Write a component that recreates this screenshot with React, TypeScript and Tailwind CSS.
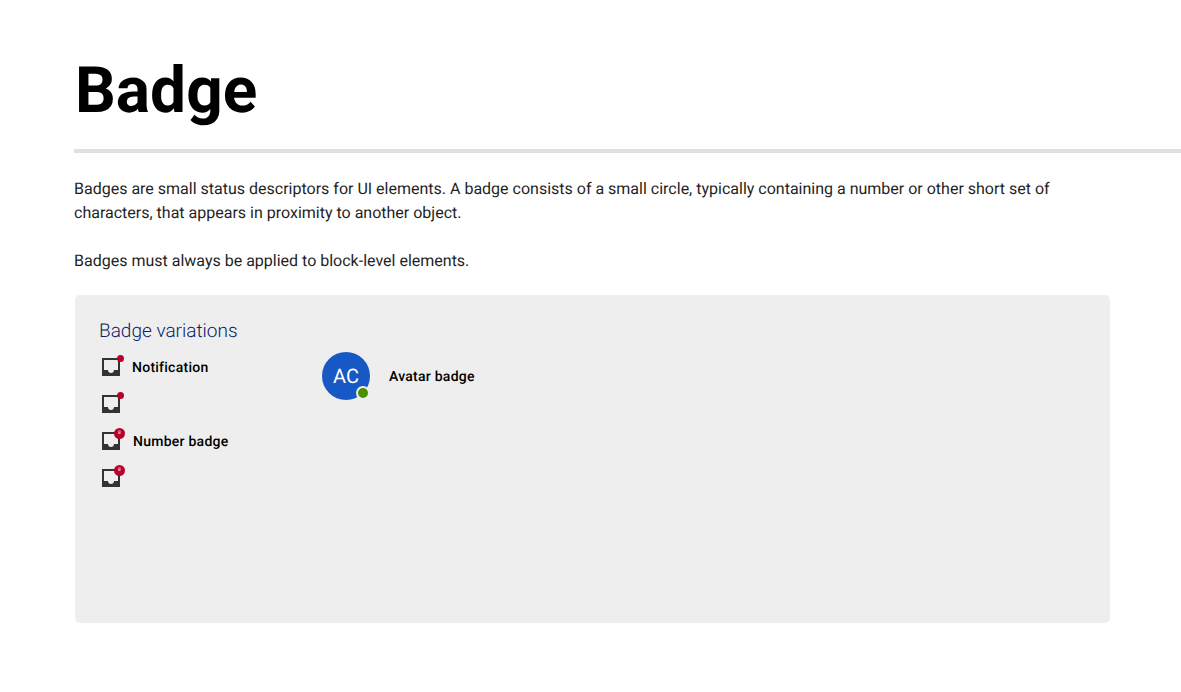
function InboxIcon() {
  return (
    <svg width="18" height="18" viewBox="0 0 18 18" className="block">
      <path
        fillRule="evenodd"
        fill="#333333"
        d="M0 0H18V18H0ZM2 2V12H6C6 13.7 7.3 15 9 15C10.7 15 12 13.7 12 12H16V2Z"
      />
    </svg>
  );
}

function BadgedIcon({ count }: { count?: boolean }) {
  return (
    <div className="relative h-[18px] w-[18px]">
      <InboxIcon />
      {count ? (
        <span className="absolute -top-[4px] -right-[5px] flex h-[11px] w-[11px] items-center justify-center rounded-full bg-[#b8002c] text-[5px] leading-none text-white">
          8
        </span>
      ) : (
        <span className="absolute -top-[3px] -right-[4px] h-[7px] w-[7px] rounded-full bg-[#b8002c]" />
      )}
    </div>
  );
}

export default function App() {
  return (
    <div className="min-h-[692px] overflow-hidden bg-white font-['Roboto',sans-serif] text-[#1f1f1f] [text-rendering:geometricPrecision]">
      <h1 className="ml-[75px] pt-[53px] text-[64px] leading-[75px] font-bold text-black">Badge</h1>
      <div className="mt-[21px] ml-[74px] h-[4px] bg-[#e0e0e0]" />
      <div className="mt-[24px] ml-[74px] w-[1000px] text-[16px] leading-[24px]">
        <p>
          Badges are small status descriptors for UI elements. A badge consists of a small circle, typically containing a
          number or other short set of characters, that appears in proximity to another object.
        </p>
        <p className="mt-[24px]">Badges must always be applied to block-level elements.</p>
      </div>
      <div className="mt-[22px] ml-[75px] h-[328px] w-[1035px] rounded-[5px] bg-[#eeeeee] pt-[24px] pl-[24px]">
        <h2 className="text-[19px] leading-[24px] font-light text-[#0b2265]">Badge variations</h2>
        <div className="mt-[15px] flex">
          <div className="flex w-[223px] flex-col pl-[3px]">
            <div className="flex h-[18px] items-center gap-[12px]">
              <BadgedIcon />
              <span className="mt-[2px] text-[14px] font-medium tracking-[0.25px] text-black">Notification</span>
            </div>
            <div className="mt-[19px]">
              <BadgedIcon />
            </div>
            <div className="mt-[19px] flex h-[18px] items-center gap-[13px]">
              <BadgedIcon count />
              <span className="mt-[2px] text-[14px] font-medium tracking-[0.25px] text-black">Number badge</span>
            </div>
            <div className="mt-[19px]">
              <BadgedIcon count />
            </div>
          </div>
          <div className="-mt-[6px] flex items-start gap-[19px]">
            <div className="relative flex h-[48px] w-[48px] items-center justify-center rounded-full bg-[#1759c4] text-[20px] text-white">
              AC
              <span className="absolute right-0 bottom-0 h-[14px] w-[14px] rounded-full border-2 border-[#eeeeee] bg-[#4b8f00]" />
            </div>
            <span className="mt-[16px] text-[14px] leading-[18px] font-medium tracking-[0.25px] text-black">Avatar badge</span>
          </div>
        </div>
      </div>
    </div>
  );
}
